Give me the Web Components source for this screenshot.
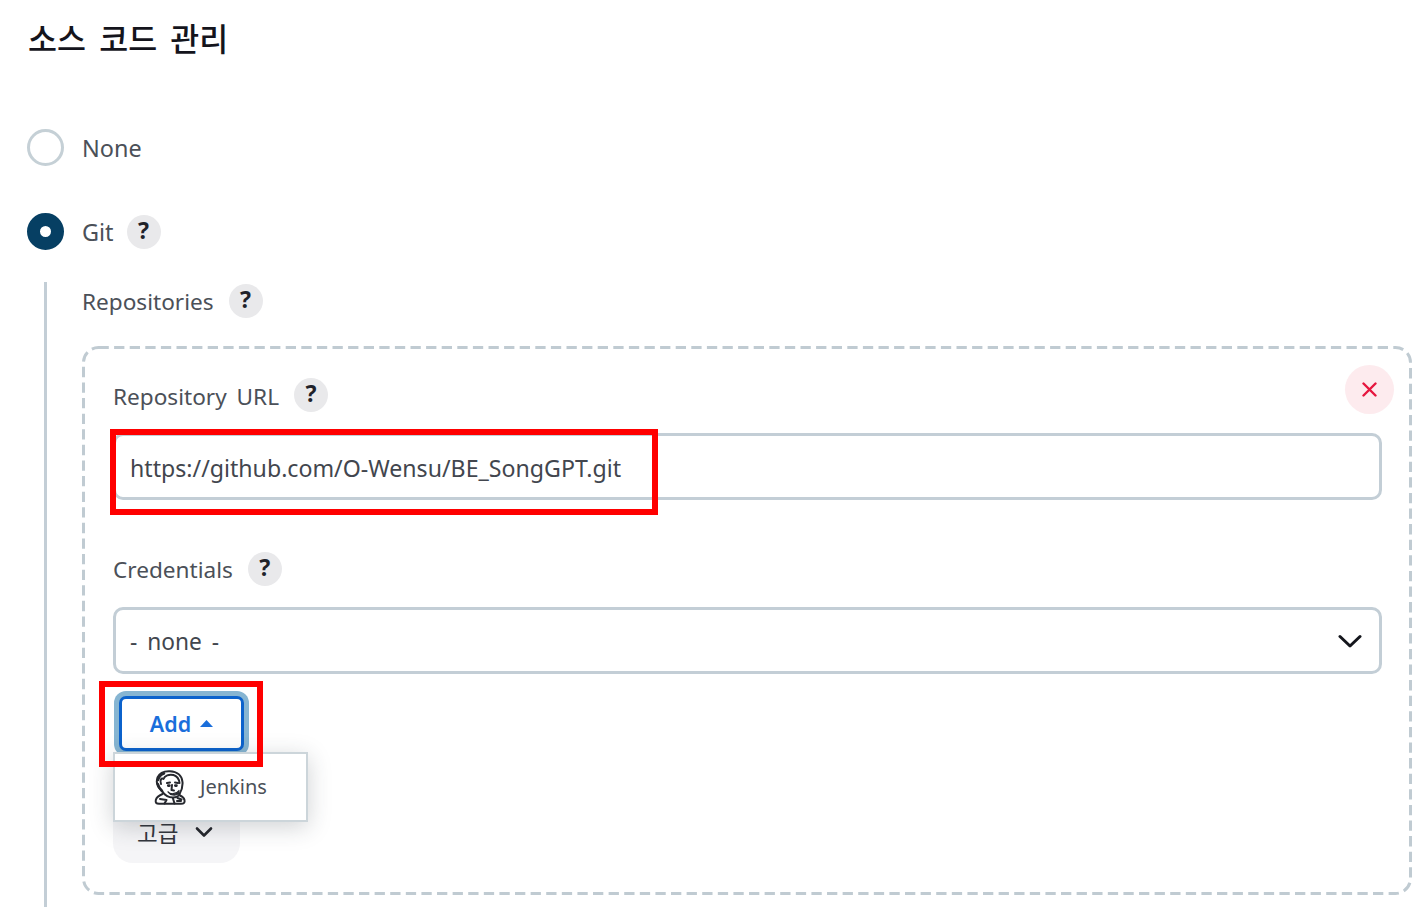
<!DOCTYPE html>
<html lang="ko">
<head>
<meta charset="utf-8">
<title>소스 코드 관리</title>
<style>
  html, body { margin: 0; height: 100%; background: #fff; overflow: hidden; }
  body { font-family: "Noto Sans", "Noto Sans CJK KR", sans-serif; color: #3f444c; }
</style>
</head>
<body>
<scm-page></scm-page>

<script>
const FONT = `"Noto Sans", "Noto Sans CJK KR", sans-serif`;

class HelpBadge extends HTMLElement {
  constructor() {
    super();
    this.attachShadow({ mode: 'open' });
    this.shadowRoot.innerHTML = `
      <style>
        :host {
          display: inline-flex;
          align-items: center;
          justify-content: center;
          box-sizing: border-box;
          width: 34px;
          height: 34px;
          padding-bottom: 3px;
          border-radius: 50%;
          background: #e9e9eb;
          color: #20222a;
          font: 700 23px/1 ${FONT};
          flex: none;
        }
      </style>
      <span>?</span>
    `;
  }
}

class FieldLabel extends HTMLElement {
  constructor() {
    super();
    this.attachShadow({ mode: 'open' });
    this.shadowRoot.innerHTML = `
      <style>
        :host {
          display: flex;
          align-items: center;
          height: 34px;
          gap: 15px;
          font-size: 22.6px;
          color: #4b5058;
        }
        span { padding-top: var(--label-drop, 0); }
      </style>
      <span><slot></slot></span>
      <help-badge></help-badge>
    `;
  }
}

class RadioRow extends HTMLElement {
  constructor() {
    super();
    this.attachShadow({ mode: 'open' });
    this.shadowRoot.innerHTML = `
      <style>
        :host {
          display: flex;
          align-items: center;
          height: 37px;
          gap: 18px;
          font-size: 23.4px;
          color: #4b5058;
        }
        .dot {
          box-sizing: border-box;
          width: 37px;
          height: 37px;
          border-radius: 50%;
          border: 3px solid #c5d0d6;
          flex: none;
        }
        :host([checked]) .dot {
          border: 13px solid #063f63;
          background: #fff;
        }
        .text {
          display: flex;
          align-items: center;
          gap: 13px;
        }
      </style>
      <span class="dot"></span>
      <span class="text"><slot></slot></span>
    `;
  }
}

class TextBox extends HTMLElement {
  constructor() {
    super();
    this.attachShadow({ mode: 'open' });
    this.shadowRoot.innerHTML = `
      <style>
        :host {
          display: flex;
          align-items: center;
          justify-content: space-between;
          box-sizing: border-box;
          height: 67px;
          padding: 2px 17px 0 14px;
          border: 3px solid #c3ced6;
          border-radius: 10px;
          background: #fff;
          font-size: 23.15px;
          color: #42464e;
        }
        svg { display: none; margin-top: -2px; }
        :host([select]) { font-size: 22.7px; }
        :host([select]) svg { display: block; }
        :host([select]) span { word-spacing: 4px; }
      </style>
      <span><slot></slot></span>
      <svg width="24" height="16" viewBox="0 0 24 16" fill="none" stroke="#14161c" stroke-width="3" stroke-linecap="round" stroke-linejoin="round">
        <path d="M2 3.5 L12 13 L22 3.5"/>
      </svg>
    `;
  }
}

class AddButton extends HTMLElement {
  constructor() {
    super();
    this.attachShadow({ mode: 'open' });
    this.shadowRoot.innerHTML = `
      <style>
        :host {
          display: block;
          position: relative;
          width: 125px;
          margin-left: 6px;
        }
        .btn {
          display: flex;
          align-items: center;
          justify-content: center;
          gap: 9px;
          box-sizing: border-box;
          height: 55px;
          border: 3.5px solid #0b62cc;
          border-radius: 7px;
          background: #fff;
          box-shadow: 0 0 0 5px #86b5d2;
          color: #1a6edb;
          font: 600 21.5px/1 ${FONT};
        }
        .btn svg { display: block; }
        .menu {
          position: absolute;
          left: -6px;
          top: 56px;
          z-index: 2;
          box-sizing: border-box;
          width: 195px;
          height: 70px;
          display: flex;
          align-items: center;
          gap: 14px;
          padding: 0 0 0 39px;
          background: #fff;
          border: 2px solid #ccd5da;
          box-shadow: 0 5px 22px rgba(40, 50, 60, .22);
          color: #4b5058;
          font: 400 20px/1 ${FONT};
        }
      </style>
      <div class="btn">
        <span>Add</span>
        <svg width="13" height="7" viewBox="0 0 13 7"><path d="M6.5 0 L13 7 H0 Z" fill="#1a6edb"/></svg>
      </div>
      <div class="menu">
        <svg width="32" height="35" viewBox="0 0 32 35" fill="none" stroke="#26282e" stroke-width="2" stroke-linecap="round" stroke-linejoin="round">
          <path d="M8 21 C3 17 2 12 3.5 7.5 C5.5 3 10.5 .9 16 1.2 C23 1.5 28 5.5 28.5 12 C28.8 16 28 20 25.5 24"/>
          <path d="M7 14 C5.5 10 7.5 7.5 9.5 9 C10.5 5.5 15 4 19.5 5 C23 6 25 9 25.5 13"/>
          <path d="M4 10 C5 6 7 4.5 10 3.5 M3.8 14 C4.5 17 6 19 8 21" stroke-width="2.6"/>
          <path d="M8 21 C10.5 25 15 27.5 19 27.5 C22 27.5 25 26 25.5 24"/>
          <path d="M13 13 L16 12.5 M21 12.5 L24 13"/>
          <path d="M14.2 15.6 h1.2 M21.3 15.6 h1.2" stroke-width="2.6"/>
          <path d="M18 15 L17.5 20 L20 20.5"/>
          <path d="M14 21.8 C16 24.5 22 24.6 25 20.5 L24.5 23.8 C21 26 16.5 25.5 14 21.8 Z" fill="#26282e" stroke-width="1.2"/>
          <path d="M8.5 24 C5 25.5 2.5 27 1.8 30 C1.2 33 2.5 33.8 5 33.8 H27 C30 33.8 31 32.5 30.5 30 C30 28 28.5 26.5 26 25.5"/>
          <path d="M6 29 L12.5 30 L10.5 33.5 M19 28.5 L20.5 33.5 M23.5 28 L27.5 29.5 M23 31 h4" />
        </svg>
        <span>Jenkins</span>
      </div>
    `;
  }
}

class AdvancedButton extends HTMLElement {
  constructor() {
    super();
    this.attachShadow({ mode: 'open' });
    this.shadowRoot.innerHTML = `
      <style>
        :host {
          display: flex;
          align-items: center;
          gap: 17px;
          box-sizing: border-box;
          width: 127px;
          height: 63px;
          padding: 1px 0 0 24px;
          border-radius: 20px;
          background: #f5f5f7;
          color: #33363d;
          font-size: 22.5px;
        }
      </style>
      <span><slot></slot></span>
      <svg width="18" height="12" viewBox="0 0 18 12" fill="none" stroke="#24262c" stroke-width="2.6" stroke-linecap="round" stroke-linejoin="round">
        <path d="M2 2.5 L9 9.5 L16 2.5"/>
      </svg>
    `;
  }
}

class RepoCard extends HTMLElement {
  constructor() {
    super();
    this.attachShadow({ mode: 'open' });
    this.shadowRoot.innerHTML = `
      <style>
        :host {
          display: block;
          position: relative;
          box-sizing: border-box;
          width: 1330px;
          margin-top: 28px;
          padding: 32px 30px 32px 31px;
        }
        .dash {
          position: absolute;
          inset: 0;
          width: 100%;
          height: 100%;
          fill: none;
          pointer-events: none;
        }
        .dash rect {
          x: 1.5px;
          y: 1.5px;
          width: calc(100% - 3px);
          height: calc(100% - 3px);
          rx: 15px;
          stroke: #c0cbd2;
          stroke-width: 3;
          stroke-dasharray: 10.3 5.3;
        }
        .close {
          position: absolute;
          top: 19px;
          right: 18px;
          width: 49px;
          height: 49px;
          border-radius: 50%;
          background: #fdebee;
          display: flex;
          align-items: center;
          justify-content: center;
        }
        text-box { margin-top: 21px; }
        .url { --label-drop: 2px; word-spacing: 4px; }
        .cred { margin-top: 52px; --label-drop: 1px; }
        add-button { margin-top: 22px; }
        advanced-button { margin-top: 49px; }
      </style>
      <svg class="dash"><rect/></svg>
      <div class="close">
        <svg width="15" height="15" viewBox="0 0 15 15" stroke="#e6173f" stroke-width="2.4" stroke-linecap="round">
          <path d="M1.5 1.5 L13.5 13.5 M13.5 1.5 L1.5 13.5"/>
        </svg>
      </div>
      <field-label class="url">Repository URL</field-label>
      <text-box>https://github.com/O-Wensu/BE_SongGPT.git</text-box>
      <field-label class="cred">Credentials</field-label>
      <text-box select>- none -</text-box>
      <add-button></add-button>
      <advanced-button>고급</advanced-button>
    `;
  }
}

class ScmPage extends HTMLElement {
  constructor() {
    super();
    this.attachShadow({ mode: 'open' });
    this.shadowRoot.innerHTML = `
      <style>
        :host {
          display: block;
          position: relative;
          box-sizing: border-box;
          height: 907px;
          overflow: hidden;
          padding-top: 17px;
          font-family: ${FONT};
        }
        h1 {
          margin: 0 0 0 28px;
          height: 44px;
          font-size: 31.5px;
          line-height: 44px;
          font-weight: 500;
          word-spacing: 5px;
          color: #14141c;
        }
        radio-row { margin-left: 27px; }
        .none { margin-top: 68px; }
        .git { margin-top: 47px; }
        .nested {
          margin: 32px 0 0 44px;
          padding: 2px 0 60px 35px;
          border-left: 3px solid #c3ced6;
        }
        .mark {
          position: absolute;
          box-sizing: border-box;
          border: 6px solid #ff0000;
          z-index: 5;
          pointer-events: none;
        }
      </style>
      <h1>소스 코드 관리</h1>
      <radio-row class="none">None</radio-row>
      <radio-row class="git" checked>Git <help-badge></help-badge></radio-row>
      <div class="nested">
        <field-label>Repositories</field-label>
        <repo-card></repo-card>
      </div>
      <div class="mark" style="left:110px;top:429px;width:548px;height:86px"></div>
      <div class="mark" style="left:99px;top:681px;width:164px;height:86px"></div>
    `;
  }
}

customElements.define('help-badge', HelpBadge);
customElements.define('field-label', FieldLabel);
customElements.define('radio-row', RadioRow);
customElements.define('text-box', TextBox);
customElements.define('add-button', AddButton);
customElements.define('advanced-button', AdvancedButton);
customElements.define('repo-card', RepoCard);
customElements.define('scm-page', ScmPage);
</script>
</body>
</html>
